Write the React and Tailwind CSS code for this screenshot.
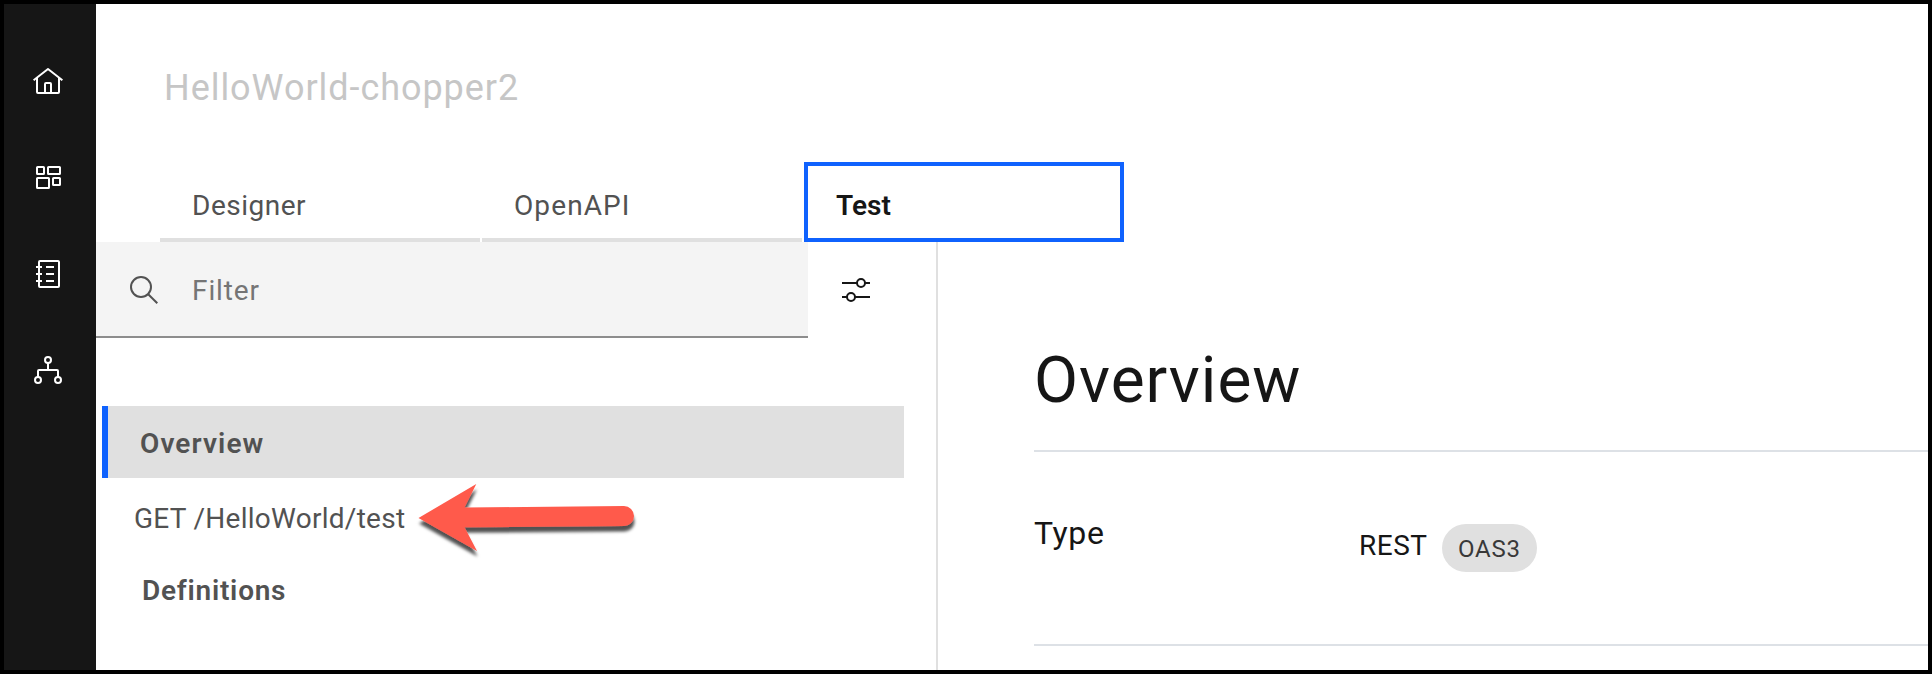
import React from "react";

const stroke = { fill: "none", stroke: "currentColor", strokeWidth: 2 };

function Icon({ children, className }) {
  return (
    <svg viewBox="0 0 32 32" className={className ?? "size-8 shrink-0"} fill="currentColor">
      {children}
    </svg>
  );
}

function HomeIcon() {
  return (
    <Icon>
      <path d="M16.6123,2.2138a1.01,1.01,0,0,0-1.2427,0L1,13.4194l1.2427,1.5717L4,13.6208V26a2.0041,2.0041,0,0,0,2,2H26a2.0037,2.0037,0,0,0,2-2V13.63L29.7573,15,31,13.4282ZM18,26H14V18h4Zm2,0V18a2.0023,2.0023,0,0,0-2-2H14a2.002,2.002,0,0,0-2,2v8H6V12.0615l10-7.79,10,7.8005V26Z" />
    </Icon>
  );
}

function DashboardIcon() {
  return (
    <Icon>
      <g {...stroke}>
        <rect x="5" y="5" width="7" height="7" rx="0.6" />
        <rect x="16" y="5" width="12" height="7" rx="0.6" />
        <rect x="5" y="16" width="12" height="10" rx="0.6" />
        <rect x="21" y="16" width="7" height="7" rx="0.6" />
      </g>
    </Icon>
  );
}

function NotebookIcon() {
  return (
    <Icon>
      <g {...stroke}>
        <rect x="7" y="3" width="20" height="26" rx="1" />
        <path d="M4 9h6M4 16h6M4 23h6M14 9h8M14 16h8M14 23h8" />
      </g>
    </Icon>
  );
}

function NetworkIcon() {
  return (
    <Icon>
      <g {...stroke}>
        <circle cx="16" cy="6" r="3" />
        <circle cx="6" cy="26" r="3" />
        <circle cx="26" cy="26" r="3" />
        <path d="M16 9v7M6 23v-6a1 1 0 0 1 1-1h18a1 1 0 0 1 1 1v6" />
      </g>
    </Icon>
  );
}

function SearchIcon() {
  return (
    <Icon className="mt-0.5 size-8 shrink-0 text-[#525252]">
      <g {...stroke}>
        <circle cx="13" cy="13" r="10" />
        <path d="M20.2 20.2 29.3 29.3" />
      </g>
    </Icon>
  );
}

function SettingsIcon() {
  return (
    <Icon className="size-8 shrink-0 text-[#161616]">
      <g {...stroke}>
        <circle cx="21" cy="9" r="4" />
        <circle cx="11" cy="23" r="4" />
        <path d="M2 9h15M25 9h5M2 23h5M15 23h15" />
      </g>
    </Icon>
  );
}

function Arrow() {
  return (
    <svg className="absolute left-[406px] top-[470px] h-[100px] w-[240px] overflow-visible" viewBox="410 474 240 100">
      <defs>
        <filter id="arrow-shadow" x="-10%" y="-20%" width="120%" height="150%">
          <feDropShadow dx="0.5" dy="5.5" stdDeviation="1.6" floodColor="#000" floodOpacity="0.68" />
        </filter>
      </defs>
      <path
        d="M418.5 518 476.3 484 464.5 507.5 624 506A10 10 0 0 1 624 526L464.5 527.3 477 551Z"
        fill="#ff5a4c"
        filter="url(#arrow-shadow)"
      />
    </svg>
  );
}

export default function App() {
  return (
    <div className="relative flex h-[674px] w-[1932px] overflow-hidden border-4 border-black bg-white font-[Roboto,'Liberation_Sans',sans-serif] text-[28px] leading-9 text-[#525252]">
      <nav className="flex w-[92px] shrink-0 flex-col items-start gap-16 bg-[#161616] pl-7 pt-[62px] text-white">
        <HomeIcon />
        <DashboardIcon />
        <NotebookIcon />
        <NetworkIcon />
      </nav>

      <main className="flex min-w-0 flex-1 flex-col">
        <header className="h-[158px] shrink-0 pl-[68px] pt-[64px]">
          <h1 className="text-[36px] leading-10 tracking-[0.95px] text-[#c6c6c6]">HelloWorld-chopper2</h1>
        </header>

        <div className="flex h-20 shrink-0 gap-0.5 pl-16">
          <div className="w-80 border-b-4 border-[#e0e0e0] pl-8 pt-[26px] tracking-[0.5px]">Designer</div>
          <div className="w-80 border-b-4 border-[#e0e0e0] pl-8 pt-[26px] tracking-[1.1px]">OpenAPI</div>
          <div className="w-80 border-4 border-[#0f62fe] pl-7 pt-[22px] font-semibold text-[#161616]">Test</div>
        </div>

        <div className="flex min-h-0 flex-1">
          <aside className="w-[842px] shrink-0 border-r-2 border-[#e0e0e0]">
            <div className="flex">
              <div className="flex h-24 w-[712px] items-center border-b-2 border-[#8d8d8d] bg-[#f4f4f4] pl-8">
                <SearchIcon />
                <span className="ml-8 pt-1 tracking-[0.9px] text-[#757575]">Filter</span>
              </div>
              <div className="flex w-24 items-center justify-center">
                <SettingsIcon />
              </div>
            </div>
            <ul className="pl-1.5 pr-8 pt-[68px]">
              <li className="flex h-[72px] items-center border-l-[6px] border-[#0f62fe] bg-[#e0e0e0] pl-8 pt-1 font-semibold tracking-[1.1px]">
                Overview
              </li>
              <li className="flex h-[72px] items-center pl-8 pt-2.5 tracking-[0.27px]">GET /HelloWorld/test</li>
              <li className="flex h-[72px] items-center pl-10 pt-2.5 font-semibold tracking-[0.75px]">Definitions</li>
            </ul>
          </aside>

          <section className="min-w-0 flex-1 pl-24 text-[#161616]">
            <div className="h-[210px] border-b-2 border-[#dde1e6] pt-[103px]">
              <h2 className="text-[64px] leading-[72px] tracking-[1px]">Overview</h2>
            </div>
            <div className="flex h-[194px] items-start border-b-2 border-[#dde1e6]">
              <div className="w-[325px] pt-[61px] text-[32px] leading-10 tracking-[0.6px]">Type</div>
              <div className="w-[83px] pt-[76px] tracking-[0.5px]">REST</div>
              <div className="mt-[72px] flex h-12 items-center rounded-full bg-[#e0e0e0] px-4 pt-0.5 text-2xl leading-8 tracking-[0.8px] text-[#393939]">
                OAS3
              </div>
            </div>
          </section>
        </div>
      </main>

      <Arrow />
    </div>
  );
}
